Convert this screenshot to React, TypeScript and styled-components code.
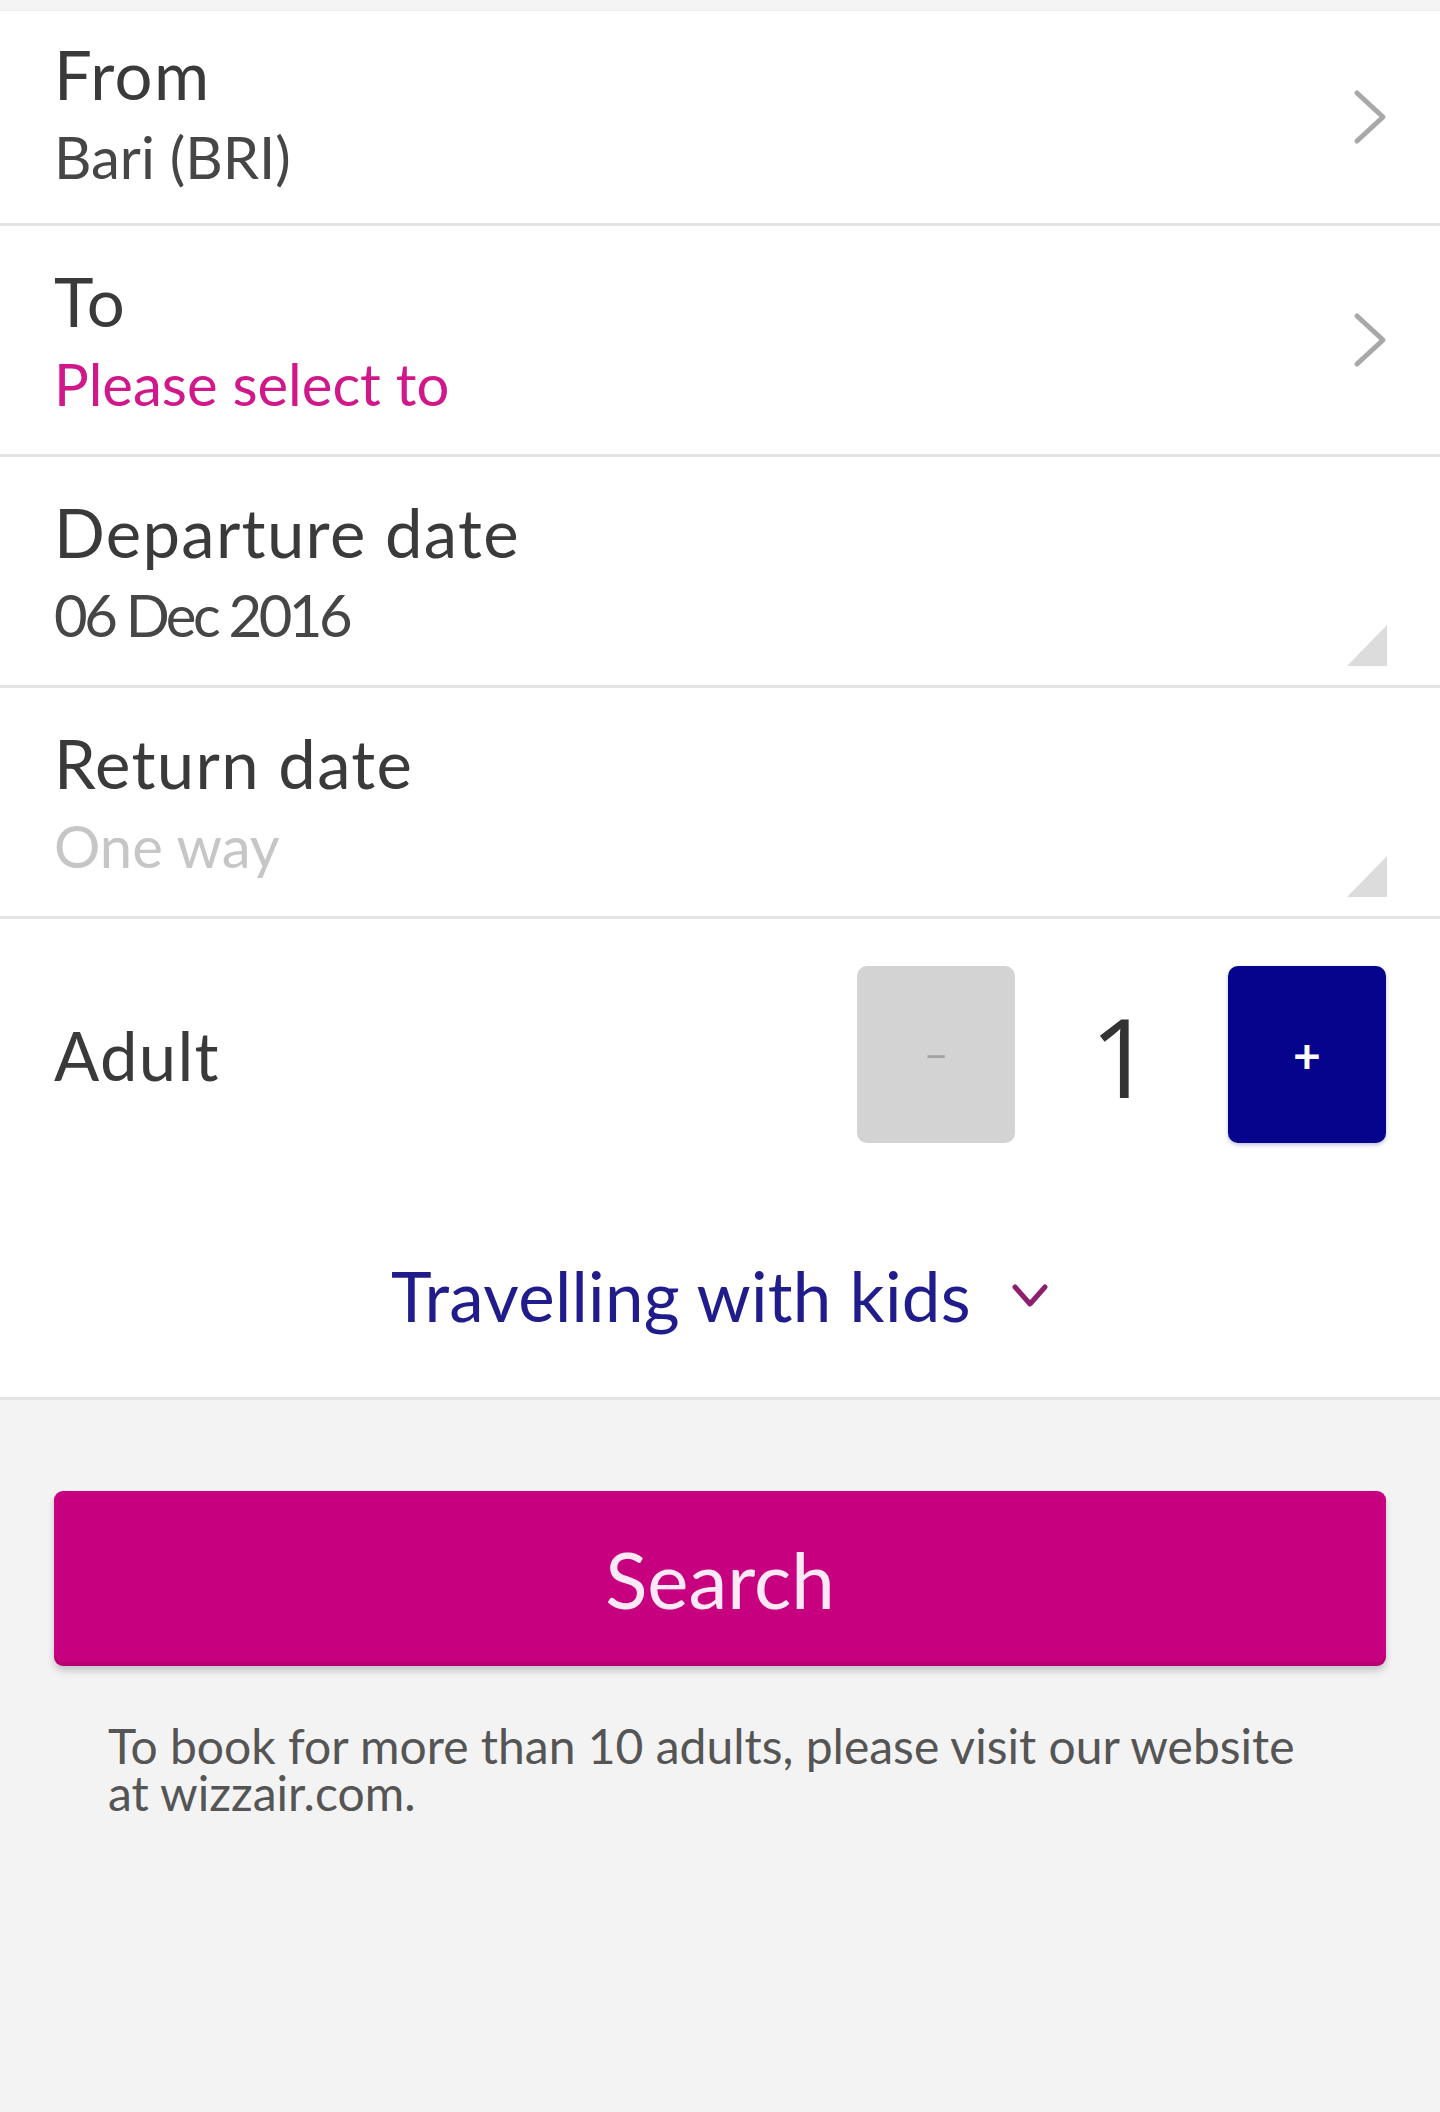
import React from "react";
import styled, { createGlobalStyle } from "styled-components";

const GlobalStyle = createGlobalStyle`
  html, body {
    margin: 0;
    padding: 0;
    background: #f3f3f3;
  }
  body {
    font-family: Lato, "Open Sans", "Liberation Sans", sans-serif;
    -webkit-font-smoothing: antialiased;
  }
  * { box-sizing: border-box; }
`;

const Page = styled.div`
  min-height: 2112px;
  display: flex;
  flex-direction: column;
  background: #f3f3f3;
`;

const TopBand = styled.div`
  height: 11px;
  background: #f4f4f4;
  border-bottom: 1px solid #ededed;
`;

const Row = styled.div<{ $first?: boolean }>`
  display: flex;
  justify-content: space-between;
  align-items: stretch;
  height: ${(p) => (p.$first ? 215 : 231)}px;
  padding: 0 53px 0 54px;
  background: #ffffff;
  border-bottom: 3px solid #e3e3e3;
`;

const Field = styled.div<{ $first?: boolean }>`
  display: flex;
  flex-direction: column;
  padding-top: ${(p) => (p.$first ? 23 : 35)}px;
`;

const Label = styled.div`
  font-size: 67px;
  line-height: 80px;
  letter-spacing: 1.3px;
  color: #3a3a3a;
`;

const Value = styled.div<{ $tone?: "accent" | "muted"; $narrow?: boolean }>`
  font-size: 58px;
  line-height: 86px;
  letter-spacing: ${(p) => (p.$narrow ? "-3.5px" : "0")};
  color: ${(p) =>
    p.$tone === "accent" ? "#d0188a" : p.$tone === "muted" ? "#c6c6c6" : "#464646"};
`;

const Indicator = styled.div<{ $corner?: boolean }>`
  display: flex;
  align-items: ${(p) => (p.$corner ? "flex-end" : "center")};
  padding-bottom: ${(p) => (p.$corner ? 19 : 0)}px;
`;

const AdultSection = styled.div`
  display: flex;
  flex-direction: column;
  gap: 113px;
  padding: 47px 54px 61px;
  background: #ffffff;
  border-bottom: 3px solid #e3e3e3;
`;

const AdultRow = styled.div`
  display: flex;
  align-items: center;
  justify-content: space-between;
  height: 177px;
`;

const Stepper = styled.div`
  display: flex;
  align-items: center;
`;

const StepButton = styled.button<{ $variant: "minus" | "plus" }>`
  width: 158px;
  height: 177px;
  border: none;
  border-radius: 10px;
  padding: 0;
  display: flex;
  align-items: center;
  justify-content: center;
  font-family: Lato, "Open Sans", sans-serif;
  background: ${(p) => (p.$variant === "plus" ? "#06038d" : "#d3d3d3")};
  color: ${(p) => (p.$variant === "plus" ? "#ffffff" : "#a3a3a3")};
  font-size: ${(p) => (p.$variant === "plus" ? 48 : 40)}px;
  font-weight: ${(p) => (p.$variant === "plus" ? 700 : 400)};
  box-shadow: ${(p) => (p.$variant === "plus" ? "0 2px 4px rgba(6, 3, 141, 0.25)" : "none")};
`;

const Count = styled.div`
  width: 213px;
  text-align: center;
  font-family: "Open Sans", Lato, sans-serif;
  font-size: 110px;
  line-height: 112px;
  color: #333333;
`;

const KidsLink = styled.button`
  align-self: center;
  display: flex;
  align-items: center;
  gap: 40px;
  padding: 0;
  border: none;
  background: none;
  font-family: Lato, "Open Sans", sans-serif;
  font-size: 69px;
  line-height: 80px;
  letter-spacing: 0.3px;
  color: #201c8c;
`;

const BottomArea = styled.div`
  display: flex;
  flex-direction: column;
  padding: 91px 54px 0;
`;

const SearchButton = styled.button`
  width: 100%;
  height: 175px;
  border: none;
  border-radius: 9px;
  background: #c6007e;
  color: #fde8f6;
  font-family: Lato, "Open Sans", sans-serif;
  font-size: 78px;
  box-shadow: inset 0 -4px 0 rgba(0, 0, 0, 0.07), 0 5px 7px rgba(0, 0, 0, 0.18);
`;

const Note = styled.p`
  margin: 56px 0 0;
  padding: 0 54px;
  font-size: 48px;
  line-height: 47px;
  color: #555555;
`;

const ChevronRight = () => (
  <svg width="34" height="56" viewBox="0 0 34 56">
    <polyline
      points="4,4 30,28 4,52"
      fill="none"
      stroke="#a8a8a8"
      strokeWidth="5"
      strokeLinecap="round"
      strokeLinejoin="round"
    />
  </svg>
);

const CornerMark = () => (
  <svg width="40" height="41" viewBox="0 0 40 41">
    <polygon points="40,0 40,41 0,41" fill="#dcdcdc" />
  </svg>
);

const ChevronDown = () => (
  <svg width="38" height="26" viewBox="0 0 38 26">
    <polyline
      points="4,4 19,21 34,4"
      fill="none"
      stroke="#8e1f6f"
      strokeWidth="5"
      strokeLinecap="round"
      strokeLinejoin="round"
    />
  </svg>
);

type FieldRow = {
  label: string;
  value: string;
  tone?: "accent" | "muted";
  narrow?: boolean;
  kind: "chevron" | "corner";
};

const rows: FieldRow[] = [
  { label: "From", value: "Bari (BRI)", kind: "chevron" },
  { label: "To", value: "Please select to", tone: "accent", kind: "chevron" },
  { label: "Departure date", value: "06 Dec 2016", narrow: true, kind: "corner" },
  { label: "Return date", value: "One way", tone: "muted", kind: "corner" },
];

export default function App() {
  return (
    <>
      <GlobalStyle />
      <Page>
        <TopBand />
        {rows.map((r, i) => (
          <Row key={r.label} $first={i === 0}>
            <Field $first={i === 0}>
              <Label>{r.label}</Label>
              <Value $tone={r.tone} $narrow={r.narrow}>
                {r.value}
              </Value>
            </Field>
            <Indicator $corner={r.kind === "corner"}>
              {r.kind === "chevron" ? <ChevronRight /> : <CornerMark />}
            </Indicator>
          </Row>
        ))}
        <AdultSection>
          <AdultRow>
            <Label>Adult</Label>
            <Stepper>
              <StepButton $variant="minus">−</StepButton>
              <Count>1</Count>
              <StepButton $variant="plus">+</StepButton>
            </Stepper>
          </AdultRow>
          <KidsLink>
            Travelling with kids
            <ChevronDown />
          </KidsLink>
        </AdultSection>
        <BottomArea>
          <SearchButton>Search</SearchButton>
          <Note>
            To book for more than 10 adults, please visit our website at wizzair.com.
          </Note>
        </BottomArea>
      </Page>
    </>
  );
}
